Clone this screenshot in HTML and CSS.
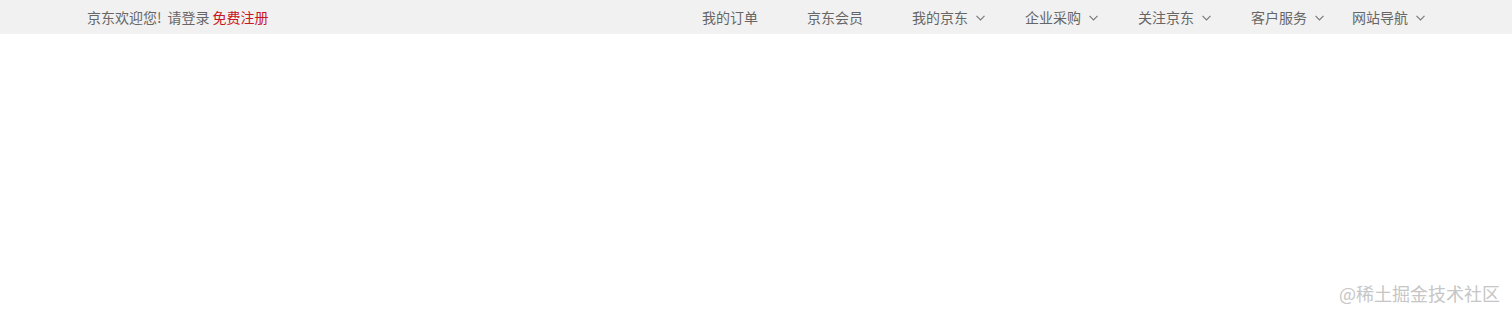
FILE: index.html
```html
<!DOCTYPE html>
<html lang="zh-CN">
<head>
<meta charset="utf-8">
<title>京东</title>
<link rel="stylesheet" href="styles.css">
</head>
<body>
<div class="shortcut">
  <div class="container">
    <div class="welcome">
      <span class="hello">京东欢迎您!</span>
      <a class="login" href="#">请登录</a>
      <a class="register" href="#">免费注册</a>
    </div>
    <ul class="nav">
      <li class="nav-item"><a href="#">我的订单</a></li>
      <li class="nav-item"><a href="#">京东会员</a></li>
      <li class="nav-item nav-item--drop"><a href="#">我的京东</a><svg class="arrow" width="9" height="6" viewBox="0 0 9 6"><polyline points="0.5,0.8 4.5,5 8.5,0.8" fill="none" stroke="#777777" stroke-width="1.1"/></svg></li>
      <li class="nav-item nav-item--drop"><a href="#">企业采购</a><svg class="arrow" width="9" height="6" viewBox="0 0 9 6"><polyline points="0.5,0.8 4.5,5 8.5,0.8" fill="none" stroke="#777777" stroke-width="1.1"/></svg></li>
      <li class="nav-item nav-item--drop"><a href="#">关注京东</a><svg class="arrow" width="9" height="6" viewBox="0 0 9 6"><polyline points="0.5,0.8 4.5,5 8.5,0.8" fill="none" stroke="#777777" stroke-width="1.1"/></svg></li>
      <li class="nav-item nav-item--drop nav-item--tight"><a href="#">客户服务</a><svg class="arrow" width="9" height="6" viewBox="0 0 9 6"><polyline points="0.5,0.8 4.5,5 8.5,0.8" fill="none" stroke="#777777" stroke-width="1.1"/></svg></li>
      <li class="nav-item nav-item--drop nav-item--last"><a href="#">网站导航</a><svg class="arrow" width="9" height="6" viewBox="0 0 9 6"><polyline points="0.5,0.8 4.5,5 8.5,0.8" fill="none" stroke="#777777" stroke-width="1.1"/></svg></li>
    </ul>
  </div>
</div>
<div class="watermark">@稀土掘金技术社区</div>
</body>
</html>
```
FILE: styles.css
```css
* {
  box-sizing: border-box;
}

html, body {
  margin: 0;
  padding: 0;
  background: #ffffff;
}

body {
  font-family: "Noto Sans CJK SC", "Liberation Sans", sans-serif;
  font-size: 14px;
  color: #666666;
  position: relative;
  height: 316px;
  overflow: hidden;
}

a {
  color: inherit;
  text-decoration: none;
}

.shortcut {
  height: 34px;
  background: #f1f1f1;
}

.container {
  width: 1338px;
  margin: 0 auto;
  height: 34px;
  display: flex;
  justify-content: space-between;
  align-items: center;
  line-height: 34px;
}

.welcome {
  display: flex;
  align-items: center;
}

.login {
  margin-left: 6px;
}

.register {
  margin-left: 3px;
  color: #c81623;
}

.nav {
  list-style: none;
  margin: 0;
  padding: 0;
  display: flex;
  align-items: center;
}

.nav-item {
  display: flex;
  align-items: center;
  margin-right: 49px;
}

.nav-item--drop {
  margin-right: 40px;
}

.nav-item--tight {
  margin-right: 28px;
}

.nav-item--last {
  margin-right: 0;
}

.arrow {
  display: block;
  margin-left: 8px;
  margin-top: 2px;
}

.watermark {
  position: absolute;
  left: 1339px;
  top: 280px;
  font-size: 18px;
  line-height: 26px;
  color: #c6c6c6;
  white-space: nowrap;
}
```
